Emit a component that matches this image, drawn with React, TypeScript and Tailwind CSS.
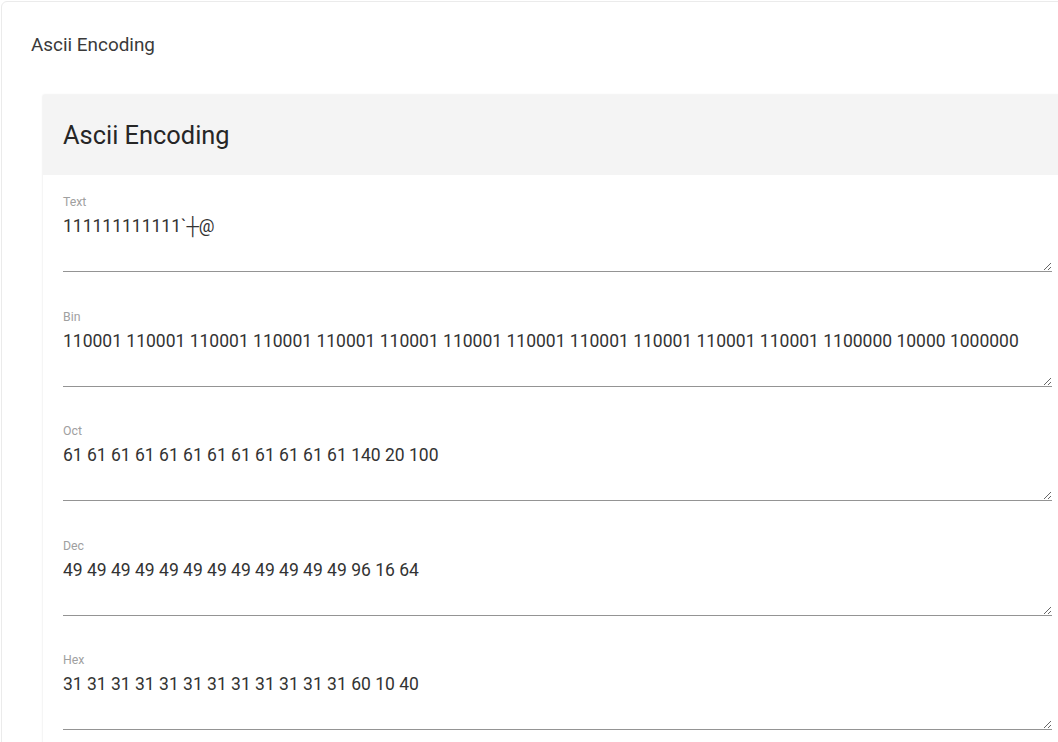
import { useState } from 'react';

type Field = { label: string; value: string };

const initialFields: Field[] = [
  { label: 'Text', value: '111111111111`\u253c@' },
  {
    label: 'Bin',
    value:
      '110001 110001 110001 110001 110001 110001 110001 110001 110001 110001 110001 110001 1100000 10000 1000000',
  },
  { label: 'Oct', value: '61 61 61 61 61 61 61 61 61 61 61 61 140 20 100' },
  { label: 'Dec', value: '49 49 49 49 49 49 49 49 49 49 49 49 96 16 64' },
  { label: 'Hex', value: '31 31 31 31 31 31 31 31 31 31 31 31 60 10 40' },
];

export default function App() {
  const [fields, setFields] = useState<Field[]>(initialFields);

  const update = (i: number, v: string) => {
    setFields(fields.map((f, idx) => (idx === i ? { ...f, value: v } : f)));
  };

  return (
    <div className="w-[1058px] h-[742px] overflow-hidden bg-white font-['Roboto',sans-serif]">
      {/* Outer card */}
      <div className="ml-px mt-px w-[1100px] min-h-[800px] rounded-md border border-[#ebebeb] bg-white">
        <div className="pl-[29px] pt-[31px] text-[18.9px] leading-[24px] text-[#3a3a3a]">Ascii Encoding</div>

        {/* Inner card */}
        <div className="ml-[41px] mt-[38px] w-[1029px] bg-white shadow-[0_0_2px_rgba(0,0,0,0.12)]">
          <div className="h-[80px] bg-[#f4f4f4] pl-[20px] flex items-center">
            <h2 className="text-[25.4px] leading-[32px] text-[#262626] pb-px">Ascii Encoding</h2>
          </div>

          <div className="px-[20px] pt-[19px] pb-10 flex flex-col gap-[36.5px]">
            {fields.map((f, i) => (
              <div key={f.label} className="flex flex-col">
                <label className="text-[12.3px] leading-[16px] text-[#a0a0a0]">{f.label}</label>
                <textarea
                  value={f.value}
                  onChange={(e) => update(i, e.target.value)}
                  className="h-[62px] w-full resize-y border-0 border-b border-[#949494] bg-transparent pt-[4px] text-[17.5px] leading-[24px] text-[#333333] outline-none font-['Roboto',sans-serif]"
                />
              </div>
            ))}
          </div>
        </div>
      </div>
    </div>
  );
}
